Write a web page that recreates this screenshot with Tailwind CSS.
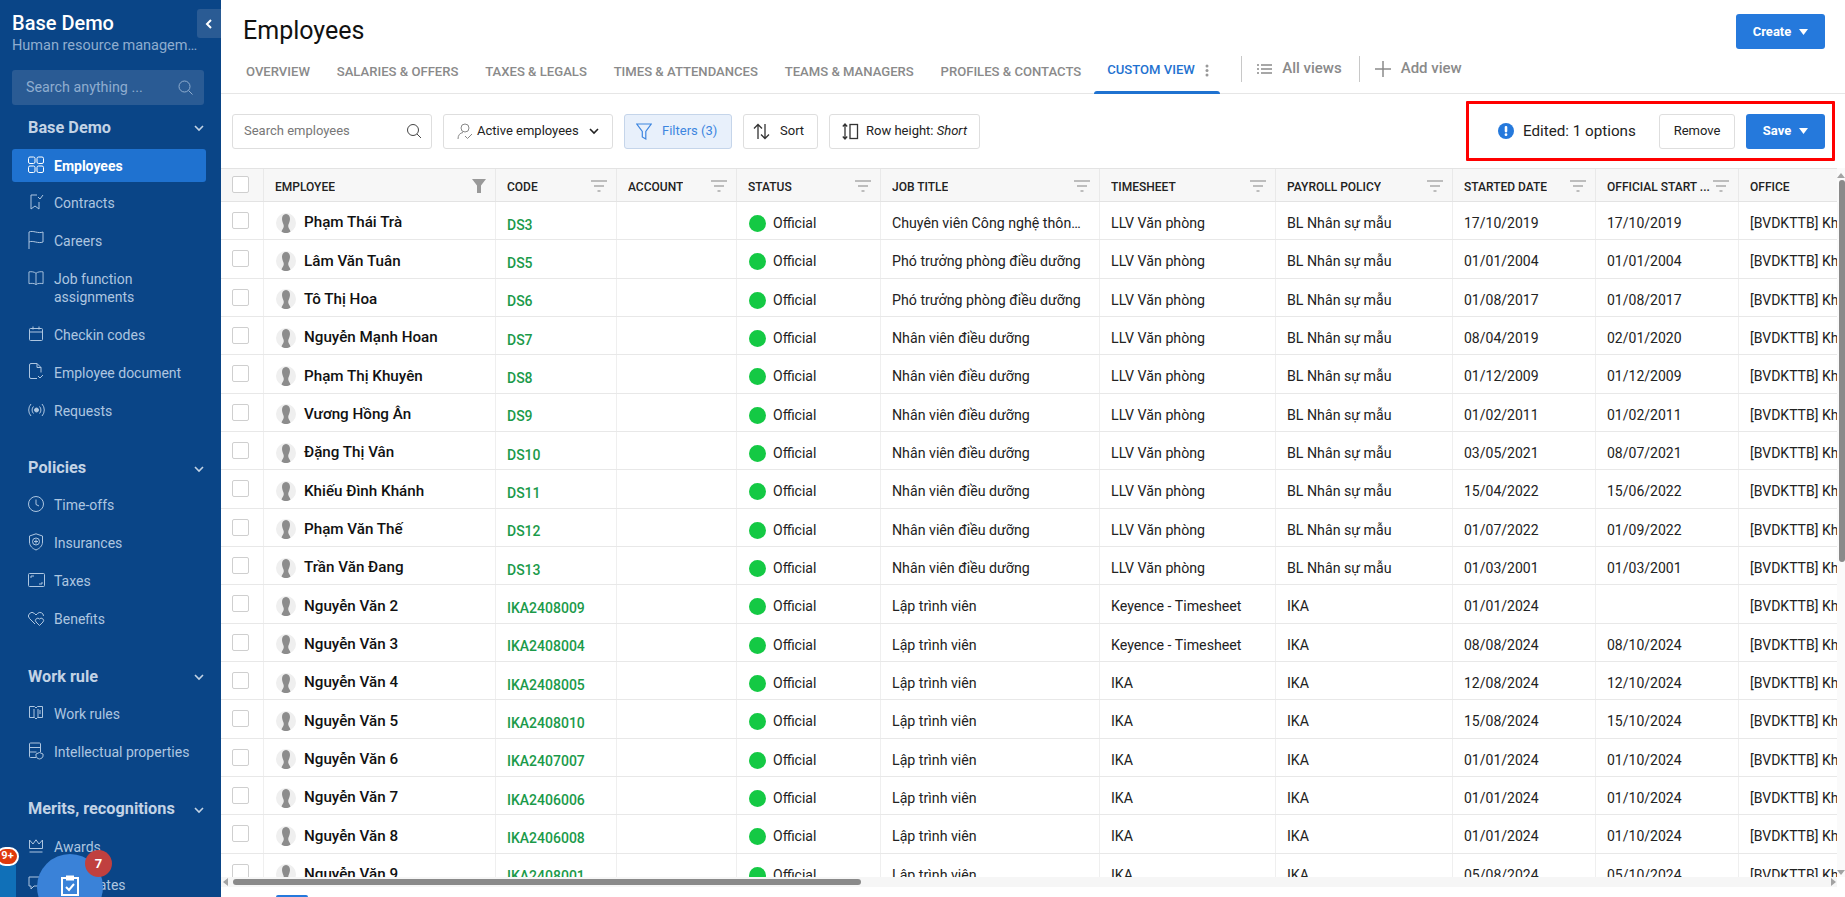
<!DOCTYPE html>
<html lang="en">
<head>
  <meta charset="UTF-8" />
  <title>Employees</title>
  <script src="https://cdn.jsdelivr.net/npm/@tailwindcss/browser@4"></script>
</head>
<body class="font-[Roboto,sans-serif] bg-white">
<div class="flex h-[897px] w-[1845px] overflow-hidden">

  <!-- sidebar -->
  <aside class="relative w-[221px] shrink-0 overflow-hidden bg-[#0a4587] px-[12px] text-[14px] text-[#aec6e0]">
    <button class="absolute right-0 top-[9px] flex h-[29px] w-[24px] items-center justify-center rounded-l-[3px] bg-[#2a5b94] text-white">
      <svg class="h-[12px] w-[12px]" viewBox="0 0 12 12" fill="none" stroke="currentColor" stroke-width="2"><path d="M8 2 4 6l4 4"/></svg>
    </button>
    <div class="pt-[11px] text-[20px] font-medium leading-[24px] text-white">Base Demo</div>
    <div class="mt-[1px] w-[190px] truncate text-[14.500px] leading-[20px] text-[#8fadcf]">Human resource management</div>
    <div class="mt-[14px] flex h-[35px] w-[192px] items-center justify-between rounded-[3px] bg-[#2a5b94] pl-[14px] pr-[10px] text-[14.300px] text-[#8fadcf]">
      <span>Search anything ...</span>
      <svg class="h-[17px] w-[17px]" viewBox="0 0 17 17" fill="none" stroke="currentColor"><circle cx="7.5" cy="7.5" r="5.5"/><path d="m11.5 11.5 4 4"/></svg>
    </div>

    <div class="mt-[4px] flex h-[38px] items-center justify-between pl-[16px] pr-[4px] text-[16.300px] font-bold text-[#c3d3e5]">
      <span>Base Demo</span>
      <svg class="h-[12px] w-[12px]" viewBox="0 0 12 12" fill="none" stroke="currentColor" stroke-width="1.6"><path d="m2 4 4 4 4-4"/></svg>
    </div>
    <nav class="mt-[1.5px] flex flex-col gap-[5px]">
      <a class="flex h-[33px] w-[194px] items-center gap-[10px] rounded-[3px] bg-[#1f72d0] pl-[16px] font-bold text-white">
        <svg class="h-[18px] w-[16px] shrink-0" viewBox="0 0 16 18" fill="none" stroke="currentColor"><rect x=".5" y="1" width="6.5" height="6.5" rx="1.5"/><rect x="9" y="1" width="6.5" height="6.5" rx="1.5"/><rect x=".5" y="10" width="6.5" height="6.5" rx="1.5"/><rect x="9" y="10" width="6.5" height="6.5" rx="1.5"/></svg>
        <span class="pt-[2px] text-[14px]">Employees</span>
      </a>
      <a class="flex h-[33px] items-center gap-[10px] pl-[16px]">
        <svg class="mb-[3px] h-[18px] w-[16px] shrink-0" viewBox="0 0 16 18" fill="none" stroke="currentColor"><path d="M9 2H3v14l4-3 4 3V9M10 4l2 2 3-4"/></svg>
        <span>Contracts</span>
      </a>
      <a class="flex h-[33px] items-center gap-[10px] pl-[16px]">
        <svg class="mb-[2px] h-[20px] w-[16px] shrink-0" viewBox="0 0 16 20" fill="none" stroke="currentColor"><path d="M1 19V2c4-2 9 2 14 0v10c-5 2-10-2-14 0"/></svg>
        <span>Careers</span>
      </a>
      <a class="flex h-[51px] items-start gap-[10px] pl-[16px] pt-[7px]">
        <svg class="h-[16px] w-[16px] shrink-0" viewBox="0 0 17 16" fill="none" stroke="currentColor"><path d="M8.5 3C7 1.500 3.500 1 1 1.500V14c2.500-.5 6-.5 7.500 1 1.500-1.500 5-1.500 7.500-1V1.500C13.500 1 10 1.500 8.500 3Zm0 0v12"/></svg>
        <span class="leading-[18px]">Job function<br>assignments</span>
      </a>
      <a class="flex h-[33px] items-center gap-[10px] pl-[16px]">
        <svg class="mb-[3px] h-[16px] w-[16px] shrink-0" viewBox="0 0 16 16" fill="none" stroke="currentColor"><rect x="1.500" y="2.500" width="13" height="12" rx="1"/><path d="M1.500 6h13M5 .5v3M11 .5v3"/></svg>
        <span>Checkin codes</span>
      </a>
      <a class="flex h-[33px] items-center gap-[10px] pl-[16px]">
        <svg class="mb-[3px] h-[17px] w-[16px] shrink-0" viewBox="0 0 16 17" fill="none" stroke="currentColor"><path d="M9 15.500H3a1.500 1.500 0 0 1-1.500-1.500V2A1.500 1.500 0 0 1 3 .5h6l4 4v5M9 .5v4h4M10 13l2 2 3-3"/></svg>
        <span>Employee document</span>
      </a>
      <a class="flex h-[33px] items-center gap-[10px] pl-[16px]">
        <svg class="mb-[3px] h-[16px] w-[17px] shrink-0" viewBox="0 0 17 16" fill="none" stroke="currentColor"><circle cx="8.500" cy="8" r="2" fill="currentColor"/><path d="M5.500 4.500a5 5 0 0 0 0 7M11.500 4.500a5 5 0 0 1 0 7M3 2a9 9 0 0 0 0 12M14 2a9 9 0 0 1 0 12"/></svg>
        <span class="-ml-[1px]">Requests</span>
      </a>
    </nav>

    <div class="mt-[22px] flex h-[38px] items-center justify-between pl-[16px] pr-[4px] text-[16.300px] font-bold text-[#c3d3e5]">
      <span>Policies</span>
      <svg class="h-[12px] w-[12px]" viewBox="0 0 12 12" fill="none" stroke="currentColor" stroke-width="1.6"><path d="m2 4 4 4 4-4"/></svg>
    </div>
    <nav class="mt-[1.5px] flex flex-col gap-[5px]">
      <a class="flex h-[33px] items-center gap-[10px] pl-[16px]">
        <svg class="mb-[3px] h-[16px] w-[16px] shrink-0" viewBox="0 0 16 16" fill="none" stroke="currentColor"><circle cx="8" cy="8" r="7.500"/><path d="M8 3.500V8.500l3 1.500"/></svg>
        <span>Time-offs</span>
      </a>
      <a class="flex h-[33px] items-center gap-[10px] pl-[16px]">
        <svg class="mb-[3px] h-[18px] w-[16px] shrink-0" viewBox="0 0 16 18" fill="none" stroke="currentColor"><path d="M8 .8 14.500 3v6c0 4-3 6.500-6.500 8C4.500 15.500 1.500 13 1.500 9V3Z"/><circle cx="8" cy="8.500" r="3.500"/><path d="M8 6.500v4M6 8.500h4"/></svg>
        <span>Insurances</span>
      </a>
      <a class="flex h-[33px] items-center gap-[9px] pl-[16px]">
        <svg class="mb-[3px] h-[14px] w-[17px] shrink-0" viewBox="0 0 17 14" fill="none" stroke="currentColor"><rect x=".5" y=".5" width="16" height="13" rx="1"/><path d="M3 5V3h3M14 9v2h-3"/></svg>
        <span>Taxes</span>
      </a>
      <a class="flex h-[33px] items-center gap-[9px] pl-[16px]">
        <svg class="mb-[3px] h-[15px] w-[17px] shrink-0" viewBox="0 0 17 15" fill="none" stroke="currentColor"><path d="M7 13 1.500 7.500A3.500 3.500 0 0 1 6.500 2.500L8 4l1.500-1.500a3.500 3.500 0 0 1 6 2.500"/><path d="m11.500 14.500-3.500-3.500a2.300 2.300 0 0 1 3.500-3 2.300 2.300 0 0 1 3.500 3Z"/></svg>
        <span>Benefits</span>
      </a>
    </nav>

    <div class="mt-[22px] flex h-[38px] items-center justify-between pl-[16px] pr-[4px] text-[16.300px] font-bold text-[#c3d3e5]">
      <span>Work rule</span>
      <svg class="h-[12px] w-[12px]" viewBox="0 0 12 12" fill="none" stroke="currentColor" stroke-width="1.6"><path d="m2 4 4 4 4-4"/></svg>
    </div>
    <nav class="mt-[1.5px] flex flex-col gap-[5px]">
      <a class="flex h-[33px] items-center gap-[10px] pl-[16px]">
        <svg class="mb-[3px] h-[14px] w-[16px] shrink-0" viewBox="0 0 16 14" fill="none" stroke="currentColor"><path d="M1.500.5h5L8 2 9.500.5h5v11h-5L8 13l-1.500-1.500h-5ZM6 3v8M10 3v8M12 4v4"/></svg>
        <span>Work rules</span>
      </a>
      <a class="flex h-[33px] items-center gap-[10px] pl-[16px]">
        <svg class="mb-[3px] h-[18px] w-[16px] shrink-0" viewBox="0 0 16 18" fill="none" stroke="currentColor"><path d="M8 15.500H2.500a1 1 0 0 1-1-1V2a1 1 0 0 1 1-1h9a1 1 0 0 1 1 1v8M1.500 5.500h11M1.500 10h7"/><path d="M11.500 10.500 15 12v2c0 1.500-1.500 2.500-3.500 3-2-.5-3.500-1.500-3.500-3v-2Z"/></svg>
        <span>Intellectual properties</span>
      </a>
    </nav>

    <div class="mt-[22px] flex h-[38px] items-center justify-between pl-[16px] pr-[4px] text-[16.300px] font-bold text-[#c3d3e5]">
      <span>Merits, recognitions</span>
      <svg class="h-[12px] w-[12px]" viewBox="0 0 12 12" fill="none" stroke="currentColor" stroke-width="1.6"><path d="m2 4 4 4 4-4"/></svg>
    </div>
    <nav class="mt-[2px] flex flex-col gap-[5px]">
      <a class="flex h-[33px] items-center gap-[10px] pl-[16px]">
        <svg class="mb-[3px] h-[14px] w-[16px] shrink-0" viewBox="0 0 16 14" fill="none" stroke="currentColor"><path d="M1.500 1v8.500h13V1L11 5 8 .8 5 5ZM1.500 13h13"/></svg>
        <span>Awards</span>
      </a>
      <a class="flex h-[33px] items-center gap-[10px] pl-[16px]">
        <svg class="mb-[3px] h-[16px] w-[16px] shrink-0" viewBox="0 0 16 16" fill="none" stroke="currentColor"><path d="M1 1h13v9H6l-3 3v-3H1Z"/></svg>
        <span>Certificates</span>
      </a>
    </nav>

    <!-- floating widgets -->
    <div class="absolute left-0 top-[860px] h-[40px] w-[16px] rounded-tr-[6px] bg-[#1070b8]"></div>
    <div class="absolute -left-[4px] top-[847px] flex h-[19px] w-[23px] items-center justify-center rounded-full border-2 border-white bg-[#e03a0c] text-[11px] font-bold text-white">9+</div>
    <div class="absolute left-[37px] top-[854px] flex h-[66px] w-[66px] justify-center rounded-full bg-[#3a82d8] pt-[21px]">
      <svg class="h-[21px] w-[20px] text-white" viewBox="0 0 20 21" fill="none" stroke="currentColor" stroke-width="2"><path d="M6 3H2v17h16V3h-4"/><path d="M7 1.500h6v3H7Z" fill="currentColor"/><path d="m6 12 3 3 5-6"/></svg>
    </div>
    <div class="absolute left-[85px] top-[850px] flex h-[27px] w-[27px] items-center justify-center rounded-full bg-[#c0403f] text-[13px] font-bold text-white">7</div>
  </aside>

  <!-- main -->
  <main class="flex min-w-0 flex-1 flex-col">
    <header class="h-[94px] shrink-0 border-b-[1.5px] border-[#e6e6e6]">
      <div class="flex h-[49px] items-start justify-between pl-[22px] pr-[20px] pt-[14px]">
        <h1 class="text-[25px] leading-[33px] text-[#111]">Employees</h1>
        <button class="flex h-[35px] w-[89px] items-center justify-center gap-[8px] rounded-[3px] bg-[#2579dc] text-[13px] font-bold text-white">
          Create
          <svg class="h-[6px] w-[9px]" viewBox="0 0 9 6" fill="currentColor"><path d="M0 0h9L4.500 6Z"/></svg>
        </button>
      </div>
      <div class="flex h-[44px] items-stretch pl-[25px] text-[13.100px] font-medium uppercase text-[#8a8a8a]">
        <div class="flex items-center gap-[26.800px] pt-[2px]">
          <span>Overview</span>
          <span>Salaries &amp; offers</span>
          <span>Taxes &amp; legals</span>
          <span>Times &amp; attendances</span>
          <span>Teams &amp; managers</span>
          <span>Profiles &amp; contacts</span>
        </div>
        <div class="relative ml-[13px] flex w-[126px] items-center gap-[10px] pb-[2px] pl-[13px] text-[#1f72d0]">
          <span>Custom view</span>
          <svg class="h-[13px] w-[4px] text-[#999]" viewBox="0 0 4 13" fill="currentColor"><circle cx="2" cy="2" r="1.500"/><circle cx="2" cy="6.500" r="1.500"/><circle cx="2" cy="11" r="1.500"/></svg>
          <span class="absolute bottom-[-1px] left-0 h-[3px] w-full rounded-t-[3px] bg-[#1f72d0]"></span>
        </div>
        <div class="ml-[21px] mt-[7px] h-[26px] w-px bg-[#c8c8c8]"></div>
        <div class="mb-[5px] ml-[15px] flex items-center gap-[10px] text-[15px] normal-case">
          <svg class="h-[10px] w-[15px]" viewBox="0 0 15 10" fill="none" stroke="currentColor" stroke-width="1.500"><path d="M0 1h2M4 1h11M0 5h2M4 5h11M0 9h2M4 9h11"/></svg>
          <span>All views</span>
        </div>
        <div class="ml-[17px] mt-[7px] h-[26px] w-px bg-[#c8c8c8]"></div>
        <div class="mb-[5px] ml-[15px] flex items-center gap-[10px] text-[15px] normal-case">
          <svg class="h-[16px] w-[16px]" viewBox="0 0 16 16" fill="none" stroke="currentColor" stroke-width="1.500"><path d="M8 0v16M0 8h16"/></svg>
          <span>Add view</span>
        </div>
      </div>
    </header>

    <div class="flex h-[74px] shrink-0 items-center gap-[11px] pl-[11px] pr-[10px] text-[13px] text-[#222]">
      <div class="flex h-[35px] w-[200px] items-center justify-between rounded-[3px] border border-[#dedede] pl-[11px] pr-[9px] text-[#777]">
        <span>Search employees</span>
        <svg class="h-[16px] w-[16px] text-[#444]" viewBox="0 0 16 16" fill="none" stroke="currentColor"><circle cx="7" cy="7" r="5.500"/><path d="m11 11 4 4"/></svg>
      </div>
      <div class="flex h-[35px] w-[170px] items-center gap-[4px] rounded-[3px] border border-[#dedede] pl-[13px]">
        <svg class="h-[17px] w-[16px] text-[#888]" viewBox="0 0 16 17" fill="none" stroke="currentColor"><circle cx="8" cy="5" r="4"/><path d="M1 16c0-4 2-6 5-6.500M8 13l2.500 2.500L15 11"/></svg>
        <span>Active employees</span>
        <svg class="ml-[6px] h-[10px] w-[10px]" viewBox="0 0 10 10" fill="none" stroke="currentColor" stroke-width="1.600"><path d="m1 3 4 4 4-4"/></svg>
      </div>
      <div class="flex h-[35px] w-[108px] items-center gap-[10px] rounded-[3px] border border-[#c5d5ea] bg-[#e8f0fb] pl-[11px] text-[#3d86e0]">
        <svg class="h-[17px] w-[16px]" viewBox="0 0 16 17" fill="none" stroke="currentColor" stroke-width="1.200"><path d="M.8 1h14.400L9.800 8.500V16l-3.500-2V8.500Z"/></svg>
        <span>Filters (3)</span>
      </div>
      <div class="flex h-[35px] w-[75px] items-center gap-[10px] rounded-[3px] border border-[#dedede] pl-[9px]">
        <svg class="h-[17px] w-[17px] text-[#333]" viewBox="0 0 17 17" fill="none" stroke="currentColor" stroke-width="1.300"><path d="M5 16V1.500M1 5.500l4-4 4 4M12 1v14.500M8 11.500l4 4 4-4"/></svg>
        <span>Sort</span>
      </div>
      <div class="flex h-[35px] w-[151px] items-center gap-[7px] rounded-[3px] border border-[#dedede] pl-[12px]">
        <svg class="h-[17px] w-[17px] text-[#333]" viewBox="0 0 17 17" fill="none" stroke="currentColor" stroke-width="1.300"><path d="M3 1v15M.8 3.500 3 1l2.200 2.500M.8 13.500 3 16l2.200-2.500"/><rect x="8" y="1.500" width="7.500" height="14"/></svg>
        <span>Row height: <i>Short</i></span>
      </div>
      <div class="ml-auto flex h-[60px] w-[369px] items-center rounded-[1px] border-[3px] border-[#ff0000] pl-[29px] pr-[7px]">
        <svg class="h-[16px] w-[16px] text-[#2579dc]" viewBox="0 0 15 15"><circle cx="7.500" cy="7.500" r="7.500" fill="currentColor"/><rect x="6.300" y="2.800" width="2.400" height="6" rx="1" fill="white"/><circle cx="7.500" cy="11" r="1.300" fill="white"/></svg>
        <span class="ml-[9px] text-[15.200px] text-[#222]">Edited: 1 options</span>
        <button class="ml-auto flex h-[35px] w-[76px] items-center justify-center rounded-[3px] border border-[#dedede] text-[13px]">Remove</button>
        <button class="ml-[11px] flex h-[35px] w-[79px] items-center justify-center gap-[8px] rounded-[3px] bg-[#2579dc] text-[13px] font-bold text-white">
          Save
          <svg class="h-[6px] w-[9px]" viewBox="0 0 9 6" fill="currentColor"><path d="M0 0h9L4.500 6Z"/></svg>
        </button>
      </div>
    </div>

    <div class="flex h-[709px] shrink-0">
      <div class="min-w-0 flex-1 overflow-hidden">
        <div id="table" class="w-[1668px]"></div>
      </div>
      <!-- vertical scrollbar -->
      <div class="relative w-[8px] shrink-0 bg-[#fafafa]">
        <div class="absolute left-0 top-[5px] h-0 w-0 border-x-[4px] border-b-[5px] border-x-transparent border-b-[#a3a3a3]"></div>
        <div class="absolute right-0 top-[12px] h-[382px] w-[6px] rounded-[3px] bg-[#8a8a8a]"></div>
        <div class="absolute bottom-[2px] left-0 h-0 w-0 border-x-[4px] border-t-[5px] border-x-transparent border-t-[#a3a3a3]"></div>
      </div>
    </div>

    <!-- horizontal scrollbar -->
    <div class="flex h-[10px] w-[1616px] shrink-0 items-center bg-[#f6f6f6] pl-[2px]">
      <div class="h-0 w-0 border-y-[4px] border-r-[5px] border-y-transparent border-r-[#a3a3a3]"></div>
      <div class="ml-[5px] h-[6px] w-[628px] rounded-[3px] bg-[#8a8a8a]"></div>
      <div class="ml-auto mr-[1px] h-0 w-0 border-y-[4px] border-l-[5px] border-y-transparent border-l-[#a3a3a3]"></div>
    </div>
    <div class="h-[10px] shrink-0 pl-[55px] pt-[8px]">
      <div class="h-[2px] w-[32px] rounded-t-[2px] bg-[#2579dc]"></div>
    </div>
  </main>
</div>

<script>
  const office = '[BVDKTTB] Khoa Công nghệ thông tin';
  const llv = 'LLV Văn phòng', bl = 'BL Nhân sự mẫu', nvdd = 'Nhân viên điều dưỡng', ptp = 'Phó trưởng phòng điều dưỡng';
  const dev = 'Lập trình viên', key = 'Keyence - Timesheet';
  const rows = [
    ['Phạm Thái Trà', 'DS3', 'Chuyên viên Công nghệ thông tin', llv, bl, '17/10/2019', '17/10/2019'],
    ['Lâm Văn Tuân', 'DS5', ptp, llv, bl, '01/01/2004', '01/01/2004'],
    ['Tô Thị Hoa', 'DS6', ptp, llv, bl, '01/08/2017', '01/08/2017'],
    ['Nguyễn Mạnh Hoan', 'DS7', nvdd, llv, bl, '08/04/2019', '02/01/2020'],
    ['Phạm Thị Khuyên', 'DS8', nvdd, llv, bl, '01/12/2009', '01/12/2009'],
    ['Vương Hồng Ân', 'DS9', nvdd, llv, bl, '01/02/2011', '01/02/2011'],
    ['Đặng Thị Vân', 'DS10', nvdd, llv, bl, '03/05/2021', '08/07/2021'],
    ['Khiếu Đình Khánh', 'DS11', nvdd, llv, bl, '15/04/2022', '15/06/2022'],
    ['Phạm Văn Thế', 'DS12', nvdd, llv, bl, '01/07/2022', '01/09/2022'],
    ['Trần Văn Đang', 'DS13', nvdd, llv, bl, '01/03/2001', '01/03/2001'],
    ['Nguyễn Văn 2', 'IKA2408009', dev, key, 'IKA', '01/01/2024', ''],
    ['Nguyễn Văn 3', 'IKA2408004', dev, key, 'IKA', '08/08/2024', '08/10/2024'],
    ['Nguyễn Văn 4', 'IKA2408005', dev, 'IKA', 'IKA', '12/08/2024', '12/10/2024'],
    ['Nguyễn Văn 5', 'IKA2408010', dev, 'IKA', 'IKA', '15/08/2024', '15/10/2024'],
    ['Nguyễn Văn 6', 'IKA2407007', dev, 'IKA', 'IKA', '01/01/2024', '01/10/2024'],
    ['Nguyễn Văn 7', 'IKA2406006', dev, 'IKA', 'IKA', '01/01/2024', '01/10/2024'],
    ['Nguyễn Văn 8', 'IKA2406008', dev, 'IKA', 'IKA', '01/01/2024', '01/10/2024'],
    ['Nguyễn Văn 9', 'IKA2408001', dev, 'IKA', 'IKA', '05/08/2024', '05/10/2024'],
  ];

  const gridCols = 'grid grid-cols-[43px_232px_121px_120px_144px_219px_176px_177px_143px_143px_150px]';
  const lines = '<svg class="mt-[1px] h-[12px] w-[16px] shrink-0 text-[#aaa]" viewBox="0 0 16 12" fill="none" stroke="currentColor" stroke-width="1.500"><path d="M0 1h16M3 6h10M6.500 11h3"/></svg>';
  const funnel = '<svg class="h-[14px] w-[14px] shrink-0 text-[#999]" viewBox="0 0 14 14" fill="currentColor"><path d="M0 0h14L9 6.500V14H5V6.500Z"/></svg>';
  const box = '<span class="block h-[17px] w-[17px] rounded-[2px] border border-[#cfcfcf] bg-white"></span>';

  const head = (label, icon = lines) => `
    <div class="flex items-start justify-between border-r border-[#e9e9e9] pl-[11px] pr-[9px] pt-[10px]">
      <span class="truncate text-[12px] font-medium leading-[16px] text-[#222]">${label}</span>${icon}
    </div>`;
  const cell = (text) => `<div class="flex items-center truncate border-r border-[#efefef] pl-[11px] pt-[6px] text-[14.200px]"><span class="truncate pr-[15px]">${text}</span></div>`;
  const dateCell = (text) => `<div class="flex items-center truncate border-r border-[#efefef] pl-[11px] pt-[6px]"><span class="truncate pr-[11px]">${text}</span></div>`;

  const header = `
    <div class="${gridCols} h-[34px] border-y-[1.500px] border-[#e3e3e3] bg-[#f7f7f7]">
      <div class="border-r border-[#e9e9e9] pl-[11px] pt-[7px]">${box}</div>
      ${head('EMPLOYEE', funnel)}${head('CODE')}${head('ACCOUNT')}${head('STATUS')}${head('JOB TITLE')}
      ${head('TIMESHEET')}${head('PAYROLL POLICY')}${head('STARTED DATE')}${head('OFFICIAL START ...')}${head('OFFICE', '')}
    </div>`;

  const body = rows.map(([name, code, job, sheet, policy, started, official]) => `
    <div class="${gridCols} h-[38.330px] border-b-[1.500px] border-[#e8e8e8] text-[14px] text-[#222]">
      <div class="border-r border-[#efefef] pl-[11px] pt-[10px]">${box}</div>
      <div class="flex items-center gap-[8px] border-r border-[#efefef] pl-[12px] pt-[4px]">
        <svg class="h-[20px] w-[20px] shrink-0" viewBox="0 0 20 20"><circle cx="10" cy="10" r="10" fill="#efefef"/><path d="M10 1c2.700 0 4 2.200 4 5 0 3-1.800 5-1.800 7 0 2 1.300 3 2.300 5.500-1.300 1-3 1.500-4.500 1.500s-3.200-.5-4.500-1.500C6.500 16 7.800 15 7.800 13c0-2-1.800-4-1.800-7 0-2.800 1.300-5 4-5Z" fill="#8c8c8c"/></svg>
        <span class="text-[15.200px] font-medium text-[#111]">${name}</span>
      </div>
      <div class="flex items-center border-r border-[#efefef] pl-[11px] pt-[9px] font-medium text-[#1b9a4a]">${code}</div>
      <div class="border-r border-[#efefef]"></div>
      <div class="flex items-center gap-[7px] border-r border-[#efefef] pl-[12px] pt-[6px]">
        <span class="h-[17px] w-[17px] rounded-full bg-[#14c944]"></span><span>Official</span>
      </div>
      ${cell(job)}${cell(sheet)}${cell(policy)}${dateCell(started)}${dateCell(official)}${dateCell(office)}
    </div>`).join('');

  document.getElementById('table').innerHTML = header + body;
</script>
</body>
</html>
